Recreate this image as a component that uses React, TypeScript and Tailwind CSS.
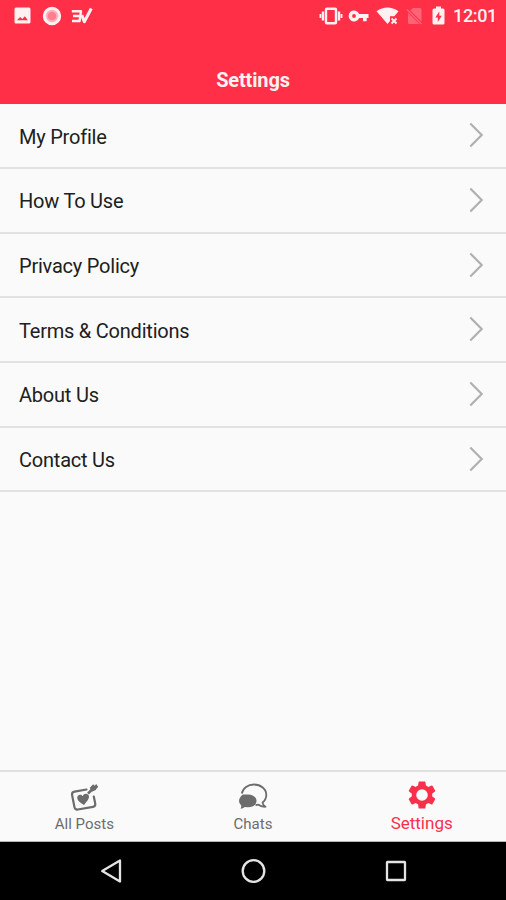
import React, { useState } from "react";

type TabName = "All Posts" | "Chats" | "Settings";

const menuItems = [
  "My Profile",
  "How To Use",
  "Privacy Policy",
  "Terms & Conditions",
  "About Us",
  "Contact Us",
];

const StatusBar: React.FC = () => (
  <div className="flex h-8 items-center justify-between pl-[14px] pr-[9px] text-[#fff0f1]">
    <div className="flex items-center pb-px">
      {/* Picture notification */}
      <svg className="h-[17px] w-[17px]" viewBox="0 0 17 17" fill="currentColor">
        <path
          fillRule="evenodd"
          d="M2 .5h13Q16.500.5 16.500 2v13q0 1.500-1.500 1.500H2Q.5 16.500.5 15V2Q.5.5 2 .5ZM3 13.300h11L10.800 9.300 8.300 12.100 6.100 10Z"
        />
      </svg>
      <svg className="ml-[11px] h-5 w-5" viewBox="0 0 20 20">
        <circle cx="10" cy="10" r="7.700" fill="#ffb0ba" stroke="currentColor" strokeWidth="3" />
        <circle cx="10" cy="10" r="4.300" fill="#ff7f8e" />
      </svg>
      <svg
        className="ml-[9px] h-[18px] w-[22px]"
        viewBox="0 0 22 18"
        fill="none"
        stroke="currentColor"
        strokeLinejoin="round"
      >
        <path d="M.8 4.200H10L8.600 14H1M2 9H9" strokeWidth="2.400" />
        <path d="M10.800 8 13.300 14.800 20.300 1.500" strokeWidth="3" />
      </svg>
    </div>

    <div className="flex items-center pb-px">
      {/* Vibrate */}
      <svg className="h-[18px] w-6" viewBox="0 0 24 18" fill="none" stroke="currentColor">
        <rect x="7" y="1.800" width="10" height="14.400" rx="1" strokeWidth="2.400" />
        <path d="M4 4.500v9M20 4.500v9" strokeWidth="2.400" />
        <path d="M1.500 7v4M22.500 7v4" strokeWidth="1.900" />
      </svg>
      {/* VPN key */}
      <svg className="ml-[5px] h-3 w-[21px]" viewBox="0 0 21 12" fill="currentColor">
        <path
          fillRule="evenodd"
          d="M11.200 4A5.500 5.500 0 1 0 11.200 8H15v3.300h3.700V8H20.500V4ZM6 4.100a1.900 1.900 0 1 1 0 3.800 1.900 1.900 0 0 1 0-3.800Z"
        />
      </svg>
      {/* Wifi without connection */}
      <svg className="ml-[7px] h-[18px] w-[23px]" viewBox="0 0 23 18">
        <path
          d="M.5 4.300Q11.500-3.200 22.500 4.300L18.300 9.300H14V14L11.500 17Z"
          fill="currentColor"
        />
        <path d="m15.500 11.500 5 5m0-5-5 5" stroke="currentColor" strokeWidth="1.900" />
      </svg>
      {/* No SIM */}
      <svg className="ml-[7px] h-[18px] w-[17px]" viewBox="0 0 17 18">
        <path d="M7 1h7q1.500 0 1.500 1.500v12L4.300 3.500ZM2 5.800 13.500 17H3.500Q2 17 2 15.500Z" fill="#ff6475" />
        <path d="M1 2.500 15.500 17" stroke="#ff6475" strokeWidth="1.500" />
      </svg>
      {/* Charging battery */}
      <svg className="ml-[9px] h-[19px] w-[13px]" viewBox="0 0 13 19" fill="currentColor">
        <path
          fillRule="evenodd"
          d="M4 .5h5v2h2q1.500 0 1.500 1.500v13q0 1.500-1.500 1.500H2Q.5 18.500.5 17V4Q.5 2.500 2 2.500h2ZM7.300 5.500 3.300 11.500h2.500v4.500l4-6.200H7.300Z"
        />
      </svg>
      <span className="ml-[8px] pt-px text-[18px] font-medium leading-none tracking-[-0.35px]">12:01</span>
    </div>
  </div>
);

const ChevronIcon: React.FC = () => (
  <svg
    className="mb-px h-[26px] w-[15px]"
    viewBox="0 0 15 26"
    fill="none"
    stroke="#b0b0b0"
    strokeWidth="2.200"
  >
    <path d="M1.300 1.500 12.700 13 1.300 24.500" />
  </svg>
);

const PostsIcon: React.FC = () => (
  <svg className="h-[30px] w-[30px]" viewBox="0 -1.500 30 30" fill="none" stroke="currentColor">
    <path
      d="M17.500 7 5.500 9.200Q2.600 9.800 3.100 12.600L5.500 24.800Q6.100 27.400 8.800 27L24 24.300Q26.700 23.800 26.200 21L24.800 14"
      strokeWidth="2.200"
      strokeLinecap="round"
    />
    <path
      d="M15.200 22.600C12.500 20.800 9 19 8.300 16 7.600 12.900 11.600 10.900 13.800 13.700 14.800 10.400 19.800 10.600 20 14.100 20.200 17 17 19.500 15.200 22.600Z"
      fill="currentColor"
      stroke="none"
    />
    <path d="M19 11.200 23 7" strokeWidth="2.600" />
    <path
      d="M20.800 5.200 24.200 1.800 25.600 3.200 27.300 1.500 29.200 4.500 27.500 6.200 26.800 7.600 22.800 9.300Z"
      fill="currentColor"
      stroke="none"
    />
  </svg>
);

const ChatsIcon: React.FC = () => (
  <svg className="h-[28px] w-[30px]" viewBox="0 -.500 30 28" fill="none" stroke="currentColor">
    <path
      d="M3.800 11C4.800 5.500 10 2 16 2 22.800 2 28.300 6.500 28.300 12.200 28.300 15.500 26.800 18.200 24.500 20Q24.700 22.500 27.500 24.200 23 24.500 20.500 22.200L17.500 22.600"
      strokeWidth="1.800"
      strokeLinejoin="round"
    />
    <path
      d="M9.800 12C15.200 12 18.500 15 18.500 18.500 18.500 22 15 24.800 9.800 24.800L6.800 24.500Q5 26.200 2.500 26.300 3.500 24.700 3.200 23 1 21.200 1 18.500 1 15 4.800 12Z"
      fill="currentColor"
      stroke="none"
    />
  </svg>
);

const GearIcon: React.FC = () => (
  <svg className="mb-[2px] h-[34px] w-[34px] shrink-0" viewBox="0 0 24 24" fill="currentColor">
    <path d="M19.140 12.940c.04-.3.060-.610.060-.940 0-.320-.020-.640-.070-.940l2.030-1.580c.180-.140.230-.410.120-.610l-1.920-3.320c-.120-.220-.370-.290-.590-.220l-2.390.960c-.5-.380-1.030-.7-1.620-.940l-.360-2.540c-.040-.240-.240-.410-.480-.410h-3.840c-.240 0-.430.170-.470.410l-.360 2.540c-.590.240-1.130.570-1.620.940l-2.390-.960c-.220-.080-.470 0-.590.220L2.740 8.870c-.120.210-.080.470.120.610l2.030 1.580c-.050.300-.090.630-.090.940s.020.640.070.940l-2.030 1.580c-.180.140-.230.410-.120.610l1.920 3.320c.120.220.370.290.590.220l2.390-.960c.5.380 1.030.7 1.620.940l.360 2.540c.050.240.240.410.480.410h3.840c.240 0 .440-.170.470-.410l.360-2.540c.590-.240 1.130-.560 1.620-.940l2.390.960c.220.080.470 0 .590-.220l1.920-3.320c.120-.220.070-.470-.120-.610l-2.010-1.580ZM12 16.100a4.100 4.100 0 1 1 0-8.200 4.100 4.100 0 0 1 0 8.200Z" />
  </svg>
);

const tabs: { name: TabName; icon: React.ReactNode }[] = [
  { name: "All Posts", icon: <PostsIcon /> },
  { name: "Chats", icon: <ChatsIcon /> },
  { name: "Settings", icon: <GearIcon /> },
];

const SystemNav: React.FC = () => (
  <div className="flex h-[58px] items-center justify-between bg-black pl-[98px] pr-[97px] text-[#e4e4e4]">
    <svg className="h-[26px] w-[26px]" viewBox="0 0 26 26" fill="none" stroke="currentColor" strokeWidth="2.300">
      <path d="M22 2.500v21L4.200 13Z" strokeLinejoin="round" />
    </svg>
    <svg className="h-[26px] w-[26px]" viewBox="0 0 26 26" fill="none" stroke="currentColor" strokeWidth="2.300">
      <circle cx="12.500" cy="13" r="10.800" />
    </svg>
    <svg className="h-[26px] w-[26px]" viewBox="0 0 26 26" fill="none" stroke="currentColor" strokeWidth="2.300">
      <rect x="4" y="4" width="18" height="18" rx=".5" />
    </svg>
  </div>
);

export default function App() {
  const [activeTab, setActiveTab] = useState<TabName>("Settings");

  return (
    <div className="flex h-[900px] w-[506px] flex-col overflow-hidden bg-[#fafafa] font-[Roboto,sans-serif]">
      <header className="h-[104px] shrink-0 bg-[#ff2f48]">
        <StatusBar />
        <h1 className="pt-[34px] text-center text-[20px] font-bold leading-7 tracking-[-0.15px] text-[#fff0f1]">
          Settings
        </h1>
      </header>

      <main className="flex-1 pt-[0.5px]">
        {menuItems.map((item) => (
          <button
            key={item}
            type="button"
            className="flex h-[64.660px] w-full cursor-pointer items-center justify-between border-b-2 border-[#e2e2e2] pl-[19px] pr-[22px] text-left text-[20px] tracking-[-0.22px] text-[#202020]"
          >
            <span className="pt-[2px]">{item}</span>
            <ChevronIcon />
          </button>
        ))}
      </main>

      <nav className="grid h-[72px] shrink-0 grid-cols-3 border-b border-t-2 border-b-[#b5b5b5] border-t-[#e0e0e0]">
        {tabs.map(({ name, icon }) => (
          <button
            key={name}
            type="button"
            onClick={() => setActiveTab(name)}
            className={`flex cursor-pointer flex-col items-center pt-[7px] ${
              activeTab === name ? "text-[17px] text-[#f8304a]" : "text-[15px] text-[#6c6c6c]"
            }`}
          >
            <span className="flex h-[34px] items-center justify-center">{icon}</span>
            <span className={activeTab === name ? "leading-[20px]" : "leading-[22px]"}>{name}</span>
          </button>
        ))}
      </nav>

      <SystemNav />
    </div>
  );
}
